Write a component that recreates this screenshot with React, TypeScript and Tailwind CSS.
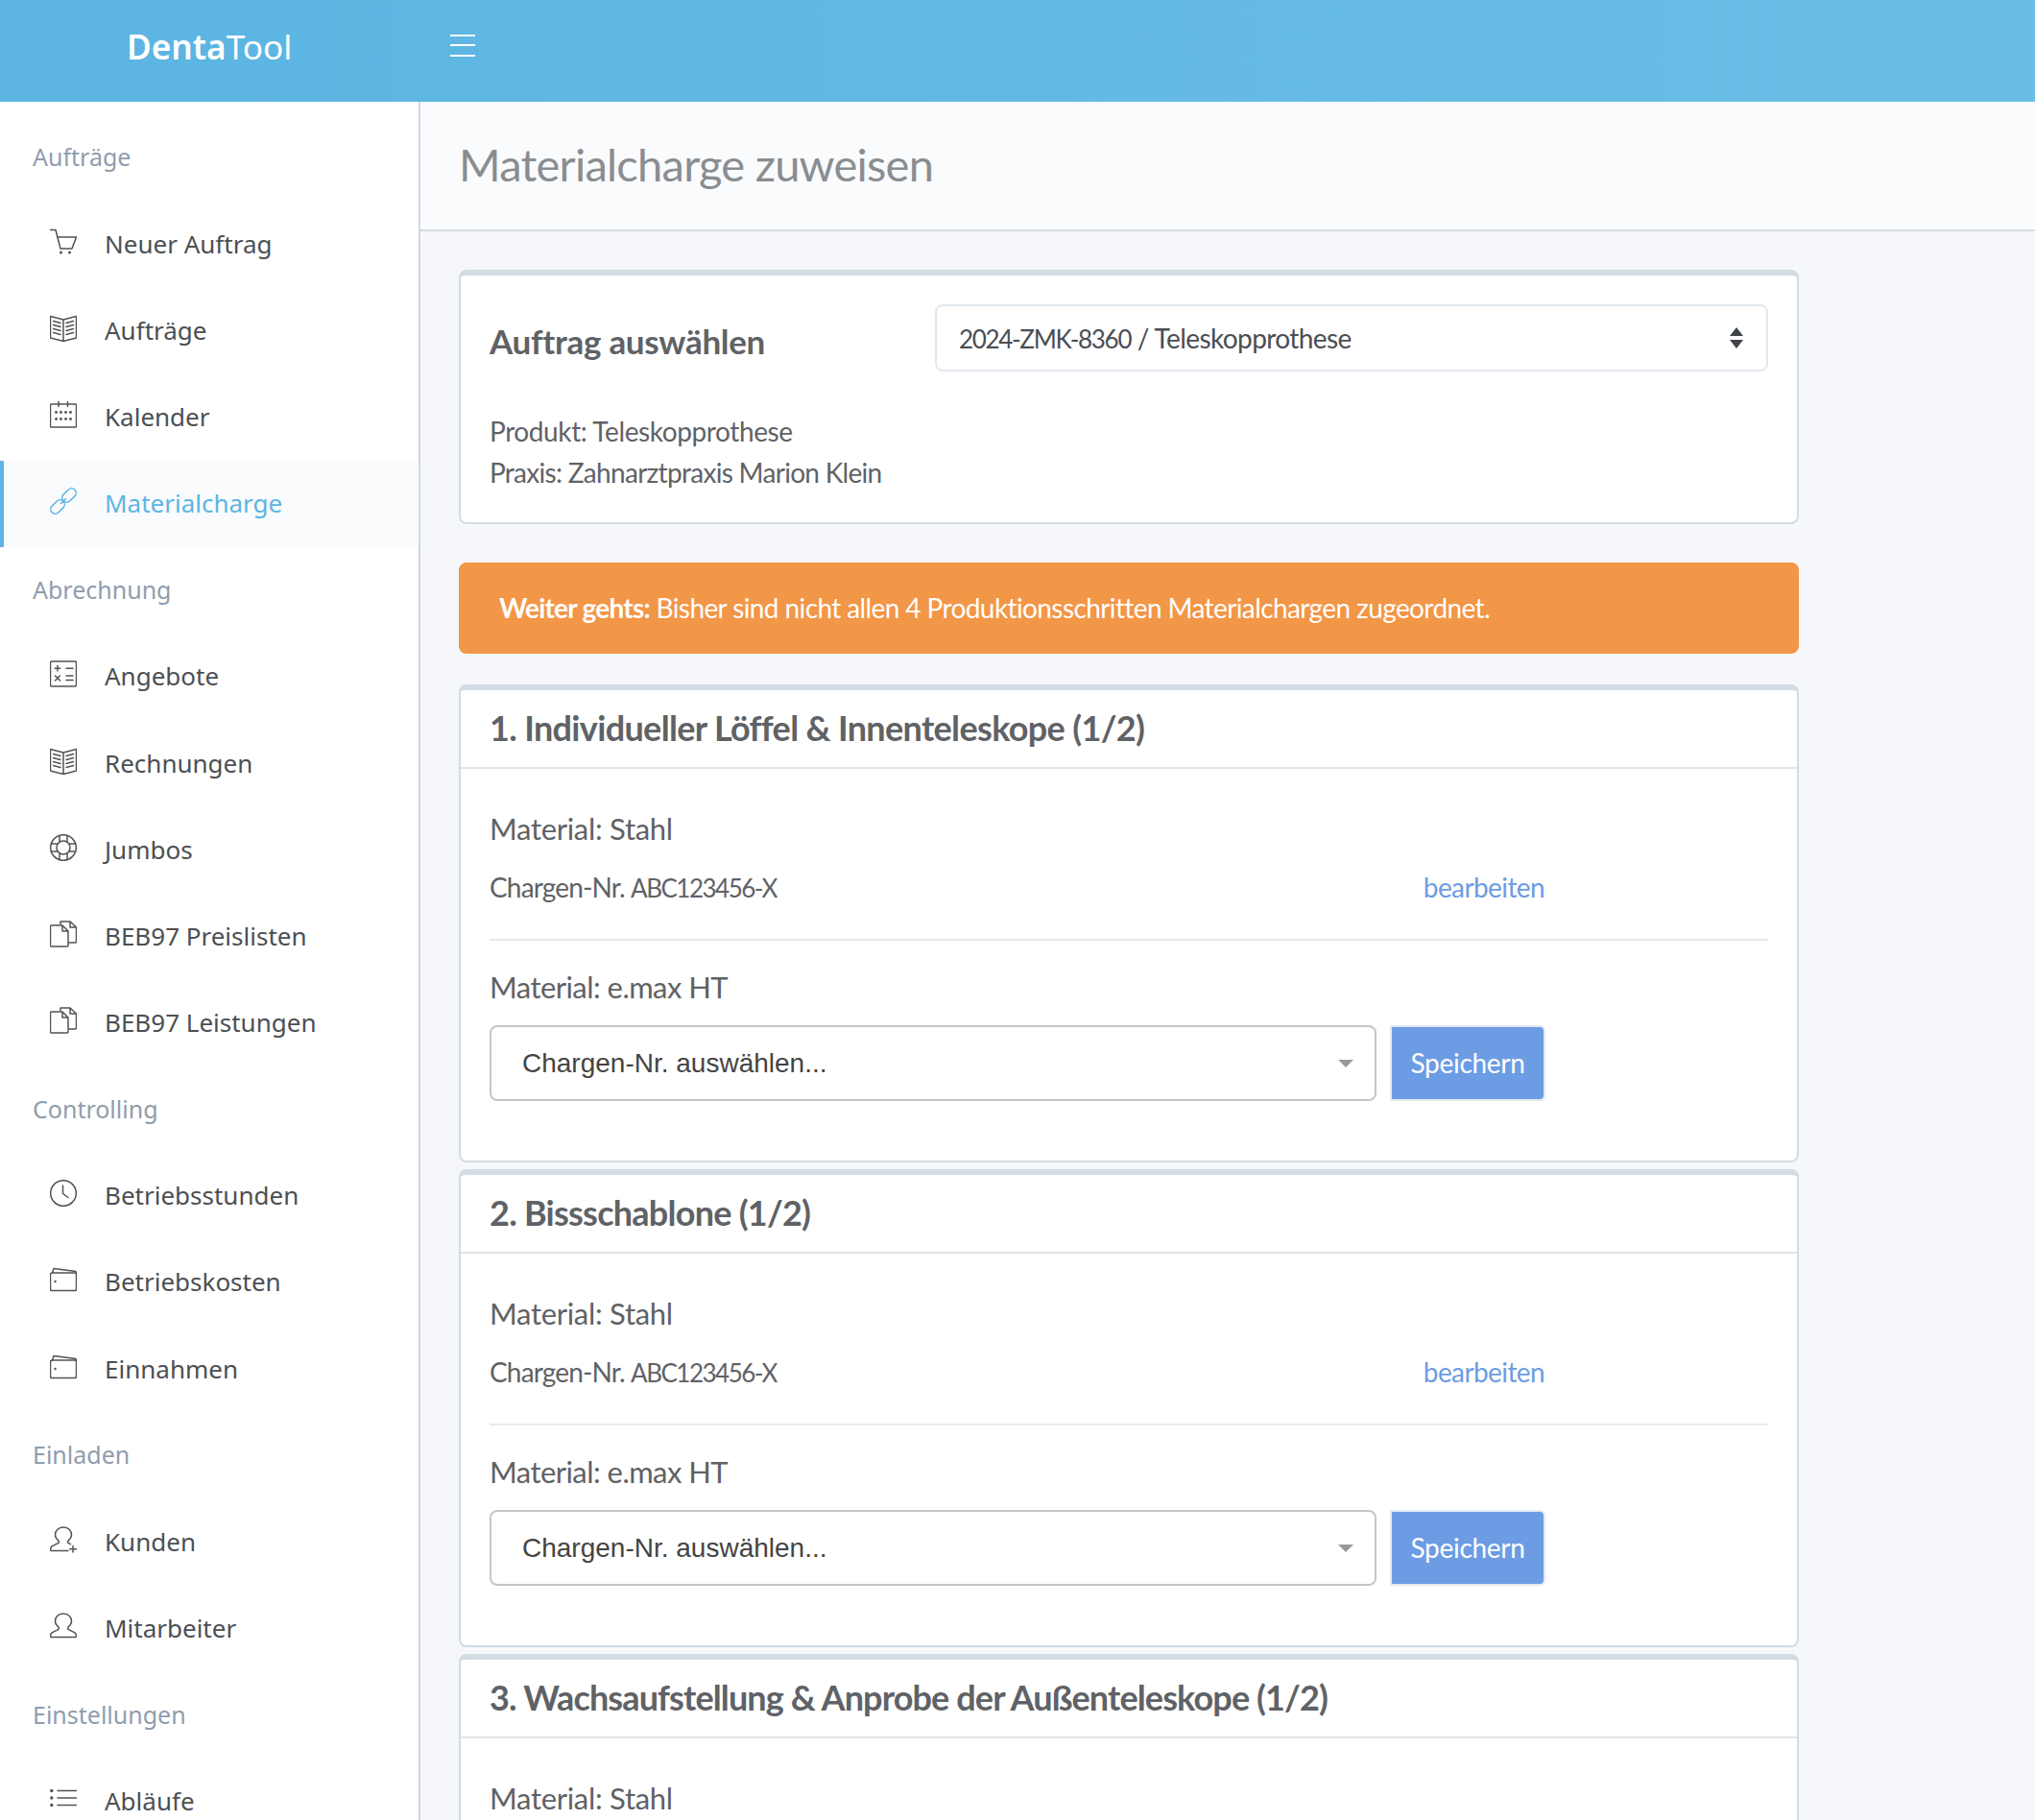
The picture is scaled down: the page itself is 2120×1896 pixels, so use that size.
import React from 'react';

const stroke = { fill: 'none', stroke: 'currentColor', strokeWidth: 1.5, strokeLinejoin: 'round' as const, strokeLinecap: 'round' as const };

const Svg = ({ children, className = 'text-[#505357]' }: { children: React.ReactNode; className?: string }) => (
  <svg viewBox="0 0 28 28" className={`h-[28px] w-[28px] ${className}`} {...stroke}>
    {children}
  </svg>
);

const CartIcon = () => (
  <Svg>
    <path d="M0.5 1.5H6L11 21H23L27.5 9H7.500" />
    <circle cx="11.500" cy="25" r="1.500" fill="currentColor" stroke="none" />
    <circle cx="20.500" cy="25" r="1.500" fill="currentColor" stroke="none" />
  </Svg>
);

const BookIcon = () => (
  <Svg>
    <path d="M0.5 1.5L14 5L27.5 1.5V24L14 27.5L0.5 24ZM14 5V27.5" />
    <path d="M3.5 6.5L11 8.5M3.5 10.5L11 12.5M3.5 14.5L11 16.5M3.5 18.5L11 20.5M17 8.5L24.5 6.5M17 12.5L24.5 10.5M17 16.5L24.5 14.5M17 20.5L24.5 18.5" />
  </Svg>
);

const CalendarIcon = () => (
  <Svg>
    <rect x="0.5" y="3" width="27" height="24" rx="1" />
    <path d="M9 0.5V5.5M18.5 0.5V5.5" />
    {[6.5, 11.5, 16.5, 21.5].map((x) => (
      <React.Fragment key={x}>
        <circle cx={x} cy="11.5" r="1.4" fill="currentColor" stroke="none" />
        <circle cx={x} cy="18.5" r="1.4" fill="currentColor" stroke="none" />
      </React.Fragment>
    ))}
  </Svg>
);

const LinkIcon = () => (
  <Svg className="text-[#5db5e3]">
    <rect x="-8.250" y="-4.750" width="16.500" height="9.500" rx="4.750" transform="translate(8 20) rotate(-45)" />
    <rect x="-8.250" y="-4.750" width="16.500" height="9.500" rx="4.750" transform="translate(20 8) rotate(-45)" />
    <path d="M11.500 16.500L16.500 11.500" />
  </Svg>
);

const CalcIcon = () => (
  <Svg>
    <rect x="0.5" y="1" width="27" height="26" rx="1.5" />
    <path d="M8 5.5V11M5.2 8.2H10.8M17 8.2H24M5.5 16L10.5 21M10.5 16L5.5 21M17 16H24M17 20.5H24" />
  </Svg>
);

const BuoyIcon = () => (
  <Svg>
    <circle cx="14" cy="14" r="13.3" />
    <circle cx="14" cy="14" r="7" />
    <path d="M10 1.500V8.300M18 1.500V8.300M10 19.700V26.500M18 19.700V26.500M1.500 10H8.300M1.500 18H8.300M19.700 10H26.500M19.700 18H26.500" />
  </Svg>
);

const FilesIcon = () => (
  <Svg>
    <path d="M1.5 5H13L19 11V26a1 1 0 0 1-1 1H1.5a1 1 0 0 1-1-1V6a1 1 0 0 1 1-1ZM13 5V11H19" />
    <path d="M11 3.5V1H21L27.5 7V22a1 1 0 0 1-1 1H20M21 1V7H27.5" />
  </Svg>
);

const ClockIcon = () => (
  <Svg>
    <circle cx="14" cy="14" r="13.3" />
    <path d="M13.5 6V14.5L19 18.5" />
  </Svg>
);

const WalletIcon = () => (
  <Svg>
    <path d="M0.5 9a2 2 0 0 1 2-2H26a1.5 1.5 0 0 1 1.5 1.5V24a1.5 1.5 0 0 1-1.5 1.5H2a1.5 1.5 0 0 1-1.5-1.5Z" />
    <path d="M2.5 7L4 2.5L27 5.5V7.5" />
    <circle cx="5.5" cy="16" r="1.2" fill="currentColor" stroke="none" />
  </Svg>
);

const UserPlusIcon = () => (
  <Svg>
    <path d="M19 25.5H1.5a1 1 0 0 1-1-1c0-1.5.5-3 2-3.8l6-3c1-.5 1-2 .2-3C6 12.500 5.500 10.500 5.500 9 5.500 4.500 9 1 14 1s8.500 3.500 8.500 8c0 1.500-.5 3.500-3.200 5.700-.8 1-.8 2.500.2 3l2 1" />
    <path d="M24 20.500V27M20.800 23.800H27.500" />
  </Svg>
);

const UserIcon = () => (
  <Svg>
    <path d="M1.500 25.500a1 1 0 0 1-1-1c0-1.500.5-3 2-3.800l6-3c1-.5 1-2 .2-3C6 12.500 5.500 10.500 5.500 9 5.500 4.500 9 1 14 1s8.500 3.500 8.500 8c0 1.500-.5 3.500-3.200 5.700-.8 1-.8 2.500.2 3l6 3c1.500.8 2 2.300 2 3.800a1 1 0 0 1-1 1Z" />
  </Svg>
);

const ListIcon = () => (
  <Svg>
    <path d="M8 5.500H27.500M8 13H27.500M8 20.500H27.500" />
    <circle cx="1.800" cy="5.500" r="1.700" fill="currentColor" stroke="none" />
    <circle cx="1.800" cy="13" r="1.700" fill="currentColor" stroke="none" />
    <circle cx="1.800" cy="20.500" r="1.700" fill="currentColor" stroke="none" />
  </Svg>
);

type NavGroup = { label: string; items: { name: string; icon: React.ReactNode; active?: boolean }[] };

const nav: NavGroup[] = [
  {
    label: 'Aufträge',
    items: [
      { name: 'Neuer Auftrag', icon: <CartIcon /> },
      { name: 'Aufträge', icon: <BookIcon /> },
      { name: 'Kalender', icon: <CalendarIcon /> },
      { name: 'Materialcharge', icon: <LinkIcon />, active: true },
    ],
  },
  {
    label: 'Abrechnung',
    items: [
      { name: 'Angebote', icon: <CalcIcon /> },
      { name: 'Rechnungen', icon: <BookIcon /> },
      { name: 'Jumbos', icon: <BuoyIcon /> },
      { name: 'BEB97 Preislisten', icon: <FilesIcon /> },
      { name: 'BEB97 Leistungen', icon: <FilesIcon /> },
    ],
  },
  {
    label: 'Controlling',
    items: [
      { name: 'Betriebsstunden', icon: <ClockIcon /> },
      { name: 'Betriebskosten', icon: <WalletIcon /> },
      { name: 'Einnahmen', icon: <WalletIcon /> },
    ],
  },
  {
    label: 'Einladen',
    items: [
      { name: 'Kunden', icon: <UserPlusIcon /> },
      { name: 'Mitarbeiter', icon: <UserIcon /> },
    ],
  },
  { label: 'Einstellungen', items: [{ name: 'Abläufe', icon: <ListIcon /> }] },
];

const Sidebar = () => (
  <aside className="w-[438px] shrink-0 border-r-2 border-[#d3d8de] bg-white pt-[13px] font-['Noto_Sans',sans-serif]">
    {nav.map((group) => (
      <div key={group.label}>
        <div className="flex h-[90.15px] items-center pl-[34px] text-[25px] text-[#8f9dae]">{group.label}</div>
        {group.items.map((item) => (
          <div
            key={item.name}
            className={`flex h-[90.15px] items-center border-l-4 pl-[48px] ${item.active ? 'border-[#5db5e3] bg-[#fafbfc] text-[#5db5e3]' : 'border-transparent text-[#4c4f53]'}`}
          >
            <span className="-mt-[5px] flex w-[57px] shrink-0">{item.icon}</span>
            <span className="text-[26px]">{item.name}</span>
          </div>
        ))}
      </div>
    ))}
  </aside>
);

const MaterialCard = ({ title, titleClass, cutOff }: { title: string; titleClass: string; cutOff?: boolean }) => (
  <section className="mb-[7px] h-[498px] shrink-0 rounded-[8px] border-2 border-t-[6px] border-[#d3dbe3] bg-white">
    <h2 className={`flex h-[82px] items-center border-b-2 border-[#dfe4ea] pb-[2px] pl-[30px] text-[36px] font-bold text-[#5f6266] ${titleClass}`}>{title}</h2>
    <div className="pl-[30px] pr-[30px] pt-[42px]">
      <p className="h-[40px] text-[31px] leading-[40px] tracking-[-0.3px] text-[#5f6266]">Material: Stahl</p>
      {!cutOff && (
        <>
          <div className="mt-[21px] flex h-[40px] w-[1100px] items-center justify-between text-[28px]">
            <span className="text-[#5f6266]">
              <span className="tracking-[-0.85px]">Chargen-Nr. </span>
              <span className="text-[26px] tracking-[-1.5px]">ABC123456-X</span>
            </span>
            <a className="mr-[1px] tracking-[-0.6px] text-[#6c9ce4]">bearbeiten</a>
          </div>
          <hr className="mt-[34px] h-[2px] border-0 bg-[#e6ebf0]" />
          <p className="mt-[28px] h-[40px] text-[31px] leading-[40px] tracking-[-0.55px] text-[#5f6266]">Material: e.max HT</p>
          <div className="mt-[20px] flex w-[1100px] justify-between">
            <div className="flex h-[79px] w-[924px] items-center justify-between rounded-[8px] border-2 border-[#c6c6c6] pl-[32px] pr-[22px] font-['Liberation_Sans',sans-serif] text-[28px] text-[#444444]">
              <span>Chargen-Nr. auswählen...</span>
              <span className="h-0 w-0 border-x-[8px] border-t-[8px] border-x-transparent border-t-[#999999]" />
            </div>
            <button className="h-[79px] w-[162px] rounded-r-[6px] border-2 border-[#e3e9f0] bg-[#6c9ce4] pb-[1px] text-[28px] tracking-[-0.3px] text-white">Speichern</button>
          </div>
        </>
      )}
    </div>
  </section>
);

export default function App() {
  return (
    <div className="flex h-[1896px] w-[2120px] flex-col overflow-hidden bg-[#f5f7fb] font-['Lato',sans-serif]">
      <header className="flex h-[106px] shrink-0 items-center bg-gradient-to-r from-[#5bb4e2] to-[#6abee6] text-white">
        <div className="-mt-[9px] w-[469px] pl-[132px] font-['Noto_Sans',sans-serif] text-[35.2px] leading-none">
          <span className="font-semibold">Denta</span>Tool
        </div>
        <div className="-mt-[12px] flex w-[26px] flex-col gap-[8.5px]">
          <span className="h-[2px] bg-white" />
          <span className="h-[2px] bg-white" />
          <span className="h-[2px] bg-white" />
        </div>
      </header>
      <div className="flex min-h-0 flex-1">
        <Sidebar />
        <main className="min-w-0 flex-1">
          <div className="flex h-[135px] items-center border-b-2 border-[#d5dbe2] bg-[#fafbfd] pb-[3px] pl-[40px] text-[47px] tracking-[-0.75px] text-[#8a8d90]">
            Materialcharge zuweisen
          </div>
          <div className="w-[1436px] pl-[40px] pt-[40px]">
            <section className="h-[265px] rounded-[8px] border-2 border-t-[6px] border-[#d3dbe3] bg-white">
              <div className="flex h-[100px] items-start pl-[30px] pr-[30px] pt-[30px]">
                <h2 className="mt-[4px] w-[464px] shrink-0 text-[35px] font-bold leading-[69px] tracking-[-0.3px] text-[#5f6266]">Auftrag auswählen</h2>
                <div className="flex h-[70px] flex-1 items-center justify-between rounded-[8px] border-2 border-[#e2e8ee] pl-[23px] pr-[24px] text-[28px] text-[#4a4e54]">
                  <span>
                    <span className="text-[26px] tracking-[-1.3px]">2024-ZMK-8360</span>
                    <span className="tracking-[-0.6px]"> / Teleskopprothese</span>
                  </span>
                  <svg viewBox="0 0 14 22" className="h-[22px] w-[14px] fill-[#3f444a]">
                    <path d="M7 0L14 9H0ZM7 22L0 13H14Z" />
                  </svg>
                </div>
              </div>
              <div className="mt-[41px] pl-[30px] text-[28px] leading-[43px] text-[#5f6266]">
                <p className="tracking-[-0.4px]">Produkt: Teleskopprothese</p>
                <p className="tracking-[-0.7px]">Praxis: Zahnarztpraxis Marion Klein</p>
              </div>
            </section>
            <div className="mt-[40px] flex h-[95px] items-center rounded-[8px] bg-[#f29647] pb-[2px] pl-[42px] text-[28px] tracking-[-0.6px] text-white">
              <span><b className="font-bold tracking-[-0.75px]">Weiter gehts:</b> Bisher sind nicht allen 4 Produktionsschritten Materialchargen zugeordnet.</span>
            </div>
            <div className="mt-[32px]">
              <MaterialCard title="1. Individueller Löffel & Innenteleskope (1/2)" titleClass="tracking-[-0.66px]" />
              <MaterialCard title="2. Bissschablone (1/2)" titleClass="tracking-[-0.75px]" />
              <MaterialCard title="3. Wachsaufstellung & Anprobe der Außenteleskope (1/2)" titleClass="tracking-[-0.88px]" cutOff />
            </div>
          </div>
        </main>
      </div>
    </div>
  );
}
